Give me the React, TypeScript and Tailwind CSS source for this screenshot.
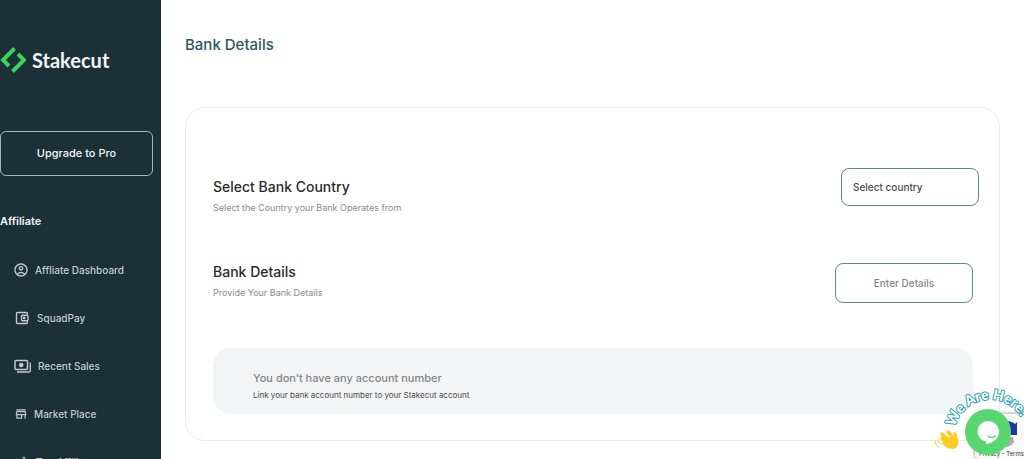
import type { ReactNode } from "react";
import {
  MdInsights,
  MdOutlineAccountCircle,
  MdOutlineStore,
} from "react-icons/md";

type NavItem = {
  label: string;
  icon: ReactNode;
  className: string;
};

const navItems: NavItem[] = [
  {
    label: "Affliate Dashboard",
    icon: <MdOutlineAccountCircle className="h-4 w-4" />,
    className: "gap-1.5 pl-[13px]",
  },
  { label: "SquadPay", icon: <WalletIcon />, className: "gap-2 pl-[15px]" },
  { label: "Recent Sales", icon: <CashIcon />, className: "gap-1.5 pl-3.5" },
  {
    label: "Market Place",
    icon: <MdOutlineStore className="h-3.5 w-3.5" />,
    className: "gap-1.5 pl-3.5",
  },
  {
    label: "Top Affiliates",
    icon: <MdInsights className="h-4 w-4" />,
    className: "gap-1.5 pl-3.5",
  },
];

export default function App() {
  return (
    <div className="relative flex h-screen overflow-hidden bg-white font-['Inter',sans-serif]">
      <Sidebar />
      <main className="flex-1 px-6 pt-[33px]">
        <h1 className="text-[15px] leading-6 font-medium text-[#2b5564]">
          Bank Details
        </h1>
        <BankCard />
      </main>
      <RecaptchaBadge />
      <ChatWidget />
    </div>
  );
}

/* ===================== Sidebar ===================== */

function Sidebar() {
  return (
    <aside className="w-[161px] shrink-0 overflow-hidden bg-[#1c3038] pt-[46px] text-[#f3f4f6]">
      <a href="#" className="flex h-7 items-center gap-1.5">
        <LogoMark />
        <span className="font-['Lato',sans-serif] text-xl leading-7 font-bold">
          Stakecut
        </span>
      </a>

      <button className="mt-[57px] h-[45px] w-[153px] rounded-md border border-[#a9b3bb] text-[11px] font-medium">
        Upgrade to Pro
      </button>

      <h2 className="mt-[37px] text-[11px] leading-4 font-semibold">
        Affiliate
      </h2>

      <nav className="mt-[33px] flex flex-col gap-8">
        {navItems.map((item) => (
          <a
            key={item.label}
            href="#"
            className={`flex h-4 items-center text-[10px] font-medium whitespace-nowrap text-[#c3c9d1] ${item.className}`}
          >
            {item.icon}
            {item.label}
          </a>
        ))}
      </nav>
    </aside>
  );
}

function LogoMark() {
  return (
    <svg className="h-7 w-[26px]" viewBox="0 0 26 28" fill="none">
      <path
        d="M14.5 2.5 3 14l6 6M12.5 25.500 24 14l-6-6"
        stroke="#3ed158"
        strokeWidth="4"
      />
    </svg>
  );
}

function WalletIcon() {
  return (
    <svg
      className="h-3.5 w-3.5"
      viewBox="0 0 14 14"
      fill="none"
      stroke="currentColor"
      strokeWidth="1.4"
    >
      <path d="M12.400 3.500V2.500a1 1 0 0 0-1-1H2.500a1 1 0 0 0-1 1v9a1 1 0 0 0 1 1h8.900a1 1 0 0 0 1-1v-1" />
      <rect x="6.500" y="4.200" width="6.500" height="5.600" rx="1" />
      <circle cx="9.200" cy="7" r="0.700" fill="currentColor" />
    </svg>
  );
}

function CashIcon() {
  return (
    <svg className="h-4 w-[18px]" viewBox="0 0 18 16" fill="none">
      <rect
        x="1"
        y="2.600"
        width="12.500"
        height="8.800"
        rx="1"
        stroke="currentColor"
        strokeWidth="1.500"
      />
      <circle cx="7.200" cy="7" r="2.300" fill="currentColor" />
      <path
        d="M16.300 4.500v8.500a1 1 0 0 1-1 1H3"
        stroke="currentColor"
        strokeWidth="1.300"
      />
    </svg>
  );
}

/* ===================== Bank card ===================== */

function BankCard() {
  return (
    <section className="mt-[50px] rounded-[20px] border border-[#ececee] pt-[60px] pr-[26px] pb-[26px] pl-[27px]">
      <div className="flex items-start justify-between">
        <div className="pt-[7px]">
          <h2 className="text-sm leading-6 font-medium text-[#2b2b2b]">
            Select Bank Country
          </h2>
          <p className="text-[9px] leading-[18px] text-[#8a8a8a]">
            Select the Country your Bank Operates from
          </p>
        </div>
        <select
          aria-label="Select country"
          className="-mr-1.5 h-[38px] w-[138px] appearance-none rounded-lg border border-[#5d8594] bg-white px-[11px] text-[10px] font-medium text-[#4b4b4b]"
        >
          <option>Select country</option>
        </select>
      </div>

      <div className="mt-[43px] flex items-end justify-between">
        <div className="pb-px">
          <h2 className="text-sm leading-6 font-medium text-[#2b2b2b]">
            Bank Details
          </h2>
          <p className="text-[9px] leading-[18px] text-[#8a8a8a]">
            Provide Your Bank Details
          </p>
        </div>
        <button className="h-10 w-[138px] rounded-lg border border-[#5d8594] text-[10px] font-medium text-[#858585]">
          Enter Details
        </button>
      </div>

      <div className="mt-[45px] rounded-[18px] bg-[#f3f4f6] px-10 pt-[22px] pb-2.5">
        <h3 className="text-[11px] leading-4 font-medium text-[#858585]">
          You don’t have any account number
        </h3>
        <p className="text-[8px] leading-[18px] text-[#4b4b4b]">
          Link your bank account number to your Stakecut account
        </p>
      </div>
    </section>
  );
}

/* ===================== Floating widgets ===================== */

function RecaptchaBadge() {
  return (
    <div className="absolute right-0 bottom-0 h-[45px] w-[49px] overflow-hidden rounded-l-sm bg-[#f9f9f9] shadow-[0_0_4px_#808080]">
      <svg className="ml-4 h-9 w-8" viewBox="0 0 32 36">
        <path d="M13 8c5-2 9 0 11 2l2-2v13H14l4-4c-1-3-3-4-5-4z" fill="#1c3aa9" />
        <path d="M10 23h12l1 5c-3 5-9 6-14 4z" fill="#ababab" />
      </svg>
      <p className="ml-1 text-[6px] leading-2 whitespace-nowrap text-[#333333]">
        <a href="#">Privacy</a> - <a href="#">Terms</a>
      </p>
    </div>
  );
}

function ChatWidget() {
  return (
    <div className="absolute right-0 bottom-0 h-[78px] w-[92px]">
      <svg className="absolute inset-0 h-full w-full" viewBox="0 0 92 78">
        <path id="greeting-arc" d="M23 46A36 36 0 0 1 93 46" fill="none" />
        <text
          className="font-['Lato',sans-serif] text-[14px] font-black"
          fill="#ffffff"
          stroke="#2a9fac"
          strokeWidth="2"
          strokeLinejoin="round"
          paintOrder="stroke"
        >
          <textPath href="#greeting-arc">We Are Here!</textPath>
        </text>
        <g stroke="#ffcc22" strokeLinecap="round" fill="none">
          <path
            d="M10 53l7 7M10 57l6 6M12 62l5 4M16 51l7 8"
            strokeWidth="3.500"
          />
          <path d="M3 60c0 3 2 5 4 6M6 58c0 3 1 4 3 5" strokeWidth="1" />
        </g>
        <path
          d="M9 54l12 3 1-6c3 0 3 3 4 7 1 5-1 10-5 10-3 0-7-3-10-7z"
          fill="#ffcc22"
        />
      </svg>
      <button
        aria-label="Open chat"
        className="absolute bottom-1 left-[33px] flex h-[46px] w-[46px] items-center justify-center rounded-full bg-[#58d66f]"
      >
        <svg className="h-6 w-6" viewBox="0 0 24 24">
          <path
            d="M12 1a10.500 10.500 0 0 0-2 20.800V24c8-1 13-6 13-12A11 11 0 0 0 12 1z"
            fill="#ffffff"
          />
          <path
            d="M12 16c2 2 5 2 7 0"
            fill="none"
            stroke="#58d66f"
            strokeWidth="1.500"
            strokeLinecap="round"
          />
        </svg>
      </button>
    </div>
  );
}
